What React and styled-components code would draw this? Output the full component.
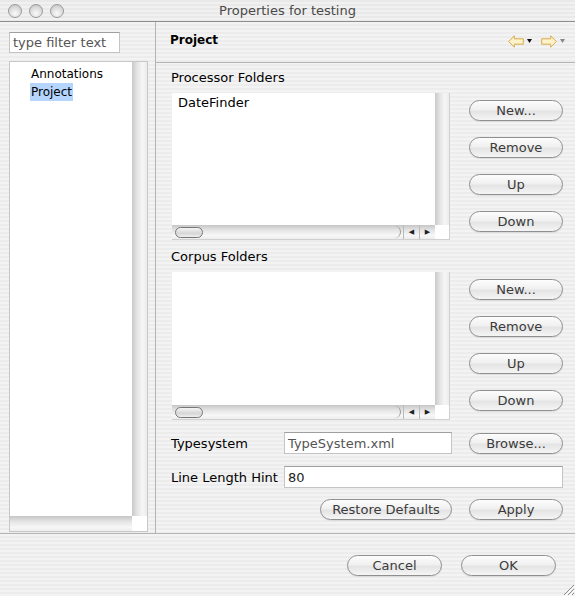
import React from 'react';
import styled, { createGlobalStyle } from 'styled-components';

const GlobalStyle = createGlobalStyle`
  html, body {
    margin: 0;
    padding: 0;
    background: #ececec;
  }
  body {
    font-family: "DejaVu Sans", "Liberation Sans", sans-serif;
    font-size: 12px;
    color: #000;
  }
`

const stripes = `
  background: repeating-linear-gradient(
    to bottom,
    #ececec 0px, #ececec 2px,
    #f3f3f3 2px, #f3f3f3 4px
  );
`

const Window = styled.div`
  width: 575px;
  height: 596px;
  display: flex;
  flex-direction: column;
  position: relative;
  overflow: hidden;
  ${stripes}
`

const TitleBar = styled.div`
  height: 21px;
  display: flex;
  align-items: center;
  position: relative;
  border-bottom: 1px solid #8e8e8e;
  background: repeating-linear-gradient(
    to bottom,
    #e9e9e9 0px, #e9e9e9 2px,
    #f1f1f1 2px, #f1f1f1 4px
  );
`

const Lights = styled.div`
  display: flex;
  gap: 7px;
  padding-left: 8px;
`

const Light = styled.span`
  width: 14px;
  height: 14px;
  border-radius: 50%;
  border: 1px solid #9a9a9a;
  background: radial-gradient(circle at 50% 70%, #fafafa 0%, #dcdcdc 55%, #bdbdbd 100%);
  box-sizing: border-box;
`

const Title = styled.div`
  flex: 1;
  text-align: center;
  color: #4a4a4a;
  font-size: 13px;
  margin-right: 64px;
`

const Body = styled.div`
  display: flex;
  height: 511px;
  border-bottom: 1px solid #b4b4b4;
`

const LeftPane = styled.div`
  width: 156px;
  border-right: 1px solid #b4b4b4;
  padding: 10px 0 0 9px;
  box-sizing: border-box;
  display: flex;
  flex-direction: column;
`

const TextInput = styled.div`
  height: ${p => p.$h || 21}px;
  width: ${p => p.$w ? `${p.$w}px` : 'auto'};
  flex: ${p => p.$grow ? 1 : 'none'};
  box-sizing: border-box;
  background: #fff;
  border: 1px solid #c4c4c4;
  border-top-color: #9f9f9f;
  display: flex;
  align-items: center;
  padding-left: 3px;
  font-size: 13px;
  color: ${p => p.$muted ? '#555' : '#222'};
`

const TreeBox = styled.div`
  margin-top: 8px;
  width: 139px;
  height: 471px;
  box-sizing: border-box;
  border: 1px solid #c8c8c8;
  display: grid;
  grid-template-columns: 1fr 15px;
  grid-template-rows: 1fr 15px;
  background: #fff;
`

const TreeList = styled.div`
  padding: 3px 0 0 20px;
  display: flex;
  flex-direction: column;
`

const TreeItem = styled.div`
  height: 18px;
  line-height: 18px;
  font-size: 12px;
  align-self: flex-start;
  padding: 0 1px;
  background: ${p => p.$selected ? '#b5d5ff' : 'transparent'};
`

const VTrack = styled.div`
  background: linear-gradient(to right, #c9c9c9 0%, #e4e4e4 35%, #f6f6f6 70%, #ececec 100%);
`

const HTrack = styled.div`
  background: linear-gradient(to bottom, #c6c6c6 0%, #e3e3e3 35%, #f7f7f7 75%, #ededed 100%);
  display: flex;
  align-items: center;
`

const Corner = styled.div`
  background: #fff;
`

const RightPane = styled.div`
  flex: 1;
  display: flex;
  flex-direction: column;
`

const Header = styled.div`
  height: 40px;
  border-bottom: 1px solid #b4b4b4;
  display: flex;
  align-items: center;
  padding: 0 10px 0 14px;
`

const HeaderTitle = styled.div`
  flex: 1;
  font-weight: bold;
  font-size: 12px;
  margin-top: -4px;
`

const NavGroup = styled.div`
  display: flex;
  align-items: center;
  gap: 3px;
  margin-top: -2px;
`

const NavSpacer = styled.span`
  width: 3px;
`

const Content = styled.div`
  padding: 0 12px 0 15px;
  display: flex;
  flex-direction: column;
`

const SectionLabel = styled.div`
  font-size: 13px;
  height: 16px;
  line-height: 16px;
  margin-top: ${p => p.$top}px;
`

const SectionRow = styled.div`
  display: flex;
  margin-top: 7px;
  gap: 19px;
`

const ListBox = styled.div`
  width: 278px;
  height: ${p => p.$h}px;
  box-sizing: border-box;
  border: 1px solid #d0d0d0;
  border-left: none;
  border-top: none;
  display: grid;
  grid-template-columns: 1fr 14px;
  grid-template-rows: 1fr 14px;
  background: #fff;
  margin-left: 1px;
`

const ListItems = styled.div`
  padding: 2px 0 0 6px;
  font-size: 13px;
  line-height: 16px;
`

const Thumb = styled.div`
  width: 28px;
  height: 11px;
  margin-left: 3px;
  border: 1px solid #777;
  border-radius: 7px;
  box-sizing: border-box;
  background: linear-gradient(to bottom, #f4f4f4, #d6d6d6 60%, #f0f0f0);
`

const HFill = styled.div`
  flex: 1;
  height: 12px;
  border-right: 1px solid #9a9a9a;
  border-radius: 0 7px 7px 0;
  margin-right: 2px;
`

const ArrowCell = styled.div`
  width: 15px;
  height: 14px;
  display: flex;
  align-items: center;
  justify-content: center;
  border-left: 1px solid #bbb;
  font-size: 7px;
  color: #222;
`

const ButtonCol = styled.div`
  display: flex;
  flex-direction: column;
  gap: 16px;
  padding-top: 7px;
`

const Pill = styled.button`
  width: ${p => p.$w || 94}px;
  height: 21px;
  border: 1px solid #8f8f8f;
  border-radius: 11px;
  background: linear-gradient(to bottom, #fdfdfd 0%, #f0f0f0 45%, #e4e4e4 55%, #f5f5f5 100%);
  font-family: "DejaVu Sans", "Liberation Sans", sans-serif;
  font-size: 13px;
  color: #3b3b3b;
  padding: 0;
  line-height: 19px;
  box-shadow: 0 1px 1px rgba(0,0,0,0.08);
`

const FieldRow = styled.div`
  display: flex;
  align-items: center;
  margin-top: ${p => p.$top}px;
`

const FieldLabel = styled.div`
  width: 113px;
  font-size: 13px;
`

const FieldGap = styled.span`
  width: 17px;
`

const ActionRow = styled.div`
  display: flex;
  justify-content: flex-end;
  gap: 17px;
  margin-top: 11px;
`

const Footer = styled.div`
  flex: 1;
  display: flex;
  justify-content: flex-end;
  align-items: flex-start;
  padding: 21px 19px 0 0;
  gap: 19px;
`

const Grip = styled.svg`
  position: absolute;
  right: 0;
  bottom: 0;
`

const NavArrow = ({ dir }) => (
  <svg width="16" height="13" viewBox="0 0 16 13">
    <path
      d={dir === 'left'
        ? 'M0.7 6.5 L6.3 0.8 L6.3 3.8 L15.3 3.8 L15.3 9.2 L6.3 9.2 L6.3 12.2 Z'
        : 'M15.3 6.5 L9.7 0.8 L9.7 3.8 L0.7 3.8 L0.7 9.2 L9.7 9.2 L9.7 12.2 Z'}
      fill="#fdf3c9"
      stroke="#d7a951"
      strokeWidth="1"
      strokeLinejoin="round"
    />
  </svg>
)

const Caret = ({ color }) => (
  <svg width="5" height="4" viewBox="0 0 5 4">
    <path d="M0 0 L5 0 L2.5 4 Z" fill={color} />
  </svg>
)

const List = ({ h, items = [] }) => (
  <ListBox $h={h}>
    <ListItems>
      {items.map(it => <div key={it}>{it}</div>)}
    </ListItems>
    <VTrack />
    <HTrack>
      <Thumb />
      <HFill />
      <ArrowCell>◀</ArrowCell>
      <ArrowCell>▶</ArrowCell>
    </HTrack>
    <Corner />
  </ListBox>
)

const ButtonStack = () => (
  <ButtonCol>
    <Pill>New...</Pill>
    <Pill>Remove</Pill>
    <Pill>Up</Pill>
    <Pill>Down</Pill>
  </ButtonCol>
)

export default function App() {
  return (
    <Window>
      <GlobalStyle />
      <TitleBar>
        <Lights>
          <Light />
          <Light />
          <Light />
        </Lights>
        <Title>Properties for testing</Title>
      </TitleBar>
      <Body>
        <LeftPane>
          <TextInput $w={111} $muted>type filter text</TextInput>
          <TreeBox>
            <TreeList>
              <TreeItem>Annotations</TreeItem>
              <TreeItem $selected>Project</TreeItem>
            </TreeList>
            <VTrack />
            <HTrack />
            <Corner />
          </TreeBox>
        </LeftPane>
        <RightPane>
          <Header>
            <HeaderTitle>Project</HeaderTitle>
            <NavGroup>
              <NavArrow dir="left" />
              <Caret color="#111" />
              <NavSpacer />
              <NavArrow dir="right" />
              <Caret color="#888" />
            </NavGroup>
          </Header>
          <Content>
            <SectionLabel $top={7}>Processor Folders</SectionLabel>
            <SectionRow>
              <List h={147} items={['DateFinder']} />
              <ButtonStack />
            </SectionRow>
            <SectionLabel $top={9}>Corpus Folders</SectionLabel>
            <SectionRow>
              <List h={148} />
              <ButtonStack />
            </SectionRow>
            <FieldRow $top={12}>
              <FieldLabel>Typesystem</FieldLabel>
              <TextInput $w={168} $h={22} $muted>TypeSystem.xml</TextInput>
              <FieldGap />
              <Pill>Browse...</Pill>
            </FieldRow>
            <FieldRow $top={12}>
              <FieldLabel>Line Length Hint</FieldLabel>
              <TextInput $grow $h={22}>80</TextInput>
            </FieldRow>
            <ActionRow>
              <Pill $w={132}>Restore Defaults</Pill>
              <Pill>Apply</Pill>
            </ActionRow>
          </Content>
        </RightPane>
      </Body>
      <Footer>
        <Pill $w={95}>Cancel</Pill>
        <Pill $w={95}>OK</Pill>
      </Footer>
      <Grip width="13" height="13" viewBox="0 0 13 13">
        <path d="M12 2 L2 12 M12 6 L6 12 M12 10 L10 12" stroke="#8a8a8a" strokeWidth="1" />
        <path d="M13 3 L3 13 M13 7 L7 13" stroke="#fff" strokeWidth="1" />
      </Grip>
    </Window>
  );
}
